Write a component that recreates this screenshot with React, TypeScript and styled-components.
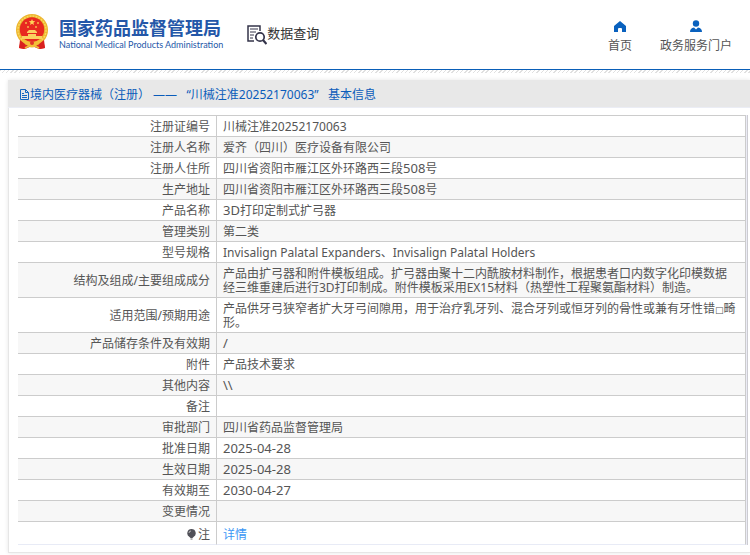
import React from "react";
import styled, { createGlobalStyle } from "styled-components";

const GlobalStyle = createGlobalStyle`
  body {
    margin: 0;
    background: #fff;
    color: #555;
    font: 12px/14px "Noto Sans", "Noto Sans CJK SC", sans-serif;
  }
  * { box-sizing: border-box; }
`;

const Header = styled.header`
  display: flex;
  align-items: flex-start;
  height: 70px;
  padding: 0 18px 0 15px;
  border-bottom: 1px solid #0a5fb8;
`;

const Hatch = styled.div`
  height: 3px;
  background: repeating-linear-gradient(135deg, #e0e0e0 0 1px, #fff 1px 3px);
`;

const Brand = styled.a`
  display: flex;
  gap: 10px;
  padding-top: 14px;
  color: #2457a8;
  text-decoration: none;
`;

const BrandText = styled.span`
  display: flex;
  flex-direction: column;
  padding-top: 4px;
  white-space: nowrap;
`;

const BrandName = styled.strong`
  font-size: 18px;
  line-height: 20px;
`;

const BrandLatin = styled.span`
  font: 400 9px/14px Lato, sans-serif;
`;

const Section = styled.h1`
  display: flex;
  align-items: flex-start;
  margin: 24px 0 0 24px;
  font-size: 13px;
  line-height: 18px;
  font-weight: 400;
  color: #333;
  white-space: nowrap;
`;

const Nav = styled.nav`
  display: flex;
  gap: 28px;
  margin-left: auto;
  padding-top: 20px;
`;

const NavLink = styled.a`
  display: flex;
  flex-direction: column;
  align-items: center;
  gap: 5px;
  color: #555;
  text-decoration: none;
  white-space: nowrap;
`;

const Card = styled.main`
  margin: 7px 0 2px 8px;
  box-shadow: 0 0 4px rgba(0, 0, 0, 0.1);
`;

const CardTitle = styled.h2`
  display: flex;
  align-items: center;
  height: 28px;
  margin: 0;
  padding: 2px 0 0 11px;
  border-bottom: 1px solid #ebedf5;
  background: #e8e8e8;
  color: #0b5cba;
  font-size: 12px;
  font-weight: 400;
  white-space: pre;
`;

const CardBody = styled.div`
  padding: 7px 2px 7px 9px;
  border: solid #e6e6e6;
  border-width: 0 0 1px 1px;
`;

const TableFrame = styled.div`
  padding-right: 1px;
  border-right: 1px solid #ccccd2;
  background: #ebebf5;
`;

const Table = styled.table`
  width: 100%;
  table-layout: fixed;
  border-collapse: separate;
  border-spacing: 0;
  border-top: 1px solid #ccc;
  background: #fff;
`;

const Row = styled.tr`
  &:nth-child(even) { background: #f7f7f7; }
  &:last-child > * {
    height: 23px;
    padding-top: 5px;
    border-bottom-color: #e8ebf6;
  }
`;

const Label = styled.th`
  width: 198px;
  padding: 4px 6px 2px 0;
  border-bottom: 1px solid #ccc;
  font-weight: 400;
  text-align: right;
`;

const Value = styled.td`
  height: 21px;
  padding: 4px 7px 2px 6px;
  border: solid #ccc;
  border-width: 0 1px 1px 1px;
  overflow-wrap: anywhere;
`;

const Latin = styled.span`
  font-size: 13px;
  line-height: 0;
`;

const SmallGlyph = styled.span`
  font-family: "DejaVu Sans", sans-serif;
  font-size: 9px;
  line-height: 0;
`;

const Detail = styled.a`
  color: #3b97f5;
  text-decoration: none;
`;

const NoteMark = styled.svg`
  margin-right: 2px;
  vertical-align: -1px;
`;

const Emblem = () => (
  <svg width="34" height="36" viewBox="0 0 34 36" aria-hidden="true">
    <path d="M6 26 4 34l6 1 7-3 7 3 6-1-2-8Z" fill="#df2822" />
    <circle cx="17" cy="16" r="16" fill="#edb52f" />
    <circle cx="17" cy="16" r="14" fill="none" stroke="#f8d95e" strokeWidth="1.5" strokeDasharray="2 1" />
    <circle cx="17" cy="15.500" r="12.200" fill="#e82920" />
    <path d="m17 5 .9 2.100 2.300.2-1.800 1.400.6 2.200-2-1.200-2 1.200.6-2.200-1.800-1.400 2.300-.2Z" fill="#ffd45a" />
    <g fill="#f8b64a"><circle cx="11" cy="9" r="1" /><circle cx="23" cy="9" r="1" /><circle cx="13" cy="13" r="1" /><circle cx="21" cy="13" r="1" /></g>
    <path d="m12 18 2-2h6l2 2v1H12Zm1 2h8v2H13Zm-6 2h20v3H7Z" fill="#fbd060" />
    <path d="M5 26q7 0 9 2 3 3 6 0 2-2 9-2l-3 4q-3-1-5 2-4 3-8 0-2-3-5-2Z" fill="#f3bf38" />
    <path d="m5 26-1 8 5 1 1-5Zm24 0 1 8-5 1-1-5Z" fill="#d9201e" />
    <circle cx="17" cy="29" r="2" fill="#e1362a" />
    <path d="m10 34 4-2m10 2-4-2" stroke="#eebd3b" strokeWidth="1.500" />
  </svg>
);

const SearchDoc = () => (
  <svg width="20" height="21" viewBox="0 0 20 21" fill="none" stroke="#34344a" aria-hidden="true">
    <path d="M7 17H1V2h12v5" strokeWidth="1.500" />
    <path d="M3 5h8M3 8h6M3 11h4M3 14h3" />
    <circle cx="13" cy="13" r="4.200" strokeWidth="1.700" />
    <path d="m16 16 3.500 4" strokeWidth="2.200" />
  </svg>
);

const HomeIcon = () => (
  <svg width="12" height="14" viewBox="0 0 12 14" aria-hidden="true">
    <path d="M6 1 0 6v6h4V9q0-1 1-1h2q1 0 1 1v3h4V6Z" fill="#0961be" />
  </svg>
);

const UserIcon = () => (
  <svg width="12" height="14" viewBox="0 0 12 14" fill="#0961be" aria-hidden="true">
    <circle cx="6" cy="3.500" r="3.200" />
    <path d="M0 12q0-4 4-4.500l2 2 2-2q4 .5 4 4.500Z" />
  </svg>
);

const FileIcon = () => (
  <svg width="11" height="12" viewBox="0 0 11 12" fill="none" stroke="#1767bf" aria-hidden="true">
    <path d="M1.500 .5H6.500L9.500 3.500v7h-8ZM6.500 .5V3.500h3M3 4.500h2M3 6.500h5M3 8.500h5" />
  </svg>
);

const Bulb = () => (
  <NoteMark width="9" height="11" viewBox="0 0 9 11" aria-hidden="true">
    <path d="M4.500 0a4.200 4.200 0 0 1 2 7.900L5.500 9h-2l-1-1.100A4.200 4.200 0 0 1 4.500 0Z" fill="#505058" />
    <path d="M3.500 9.500h2v1h-2Z" fill="#666" />
    <path d="M2 4q0-2 2-2" stroke="#bbb" fill="none" />
  </NoteMark>
);

const records: [React.ReactNode, React.ReactNode][] = [
  ["注册证编号", "川械注准20252170063"],
  ["注册人名称", "爱齐（四川）医疗设备有限公司"],
  ["注册人住所", <>四川省资阳市雁江区外环路西三段<Latin>508</Latin>号</>],
  ["生产地址", <>四川省资阳市雁江区外环路西三段<Latin>508</Latin>号</>],
  ["产品名称", <><Latin>3D</Latin>打印定制式扩弓器</>],
  ["管理类别", "第二类"],
  ["型号规格", "Invisalign Palatal Expanders、Invisalign Palatal Holders"],
  ["结构及组成/主要组成成分", "产品由扩弓器和附件模板组成。扩弓器由聚十二内酰胺材料制作，根据患者口内数字化印模数据经三维重建后进行3D打印制成。附件模板采用EX15材料（热塑性工程聚氨酯材料）制造。"],
  ["适用范围/预期用途", <>产品供牙弓狭窄者扩大牙弓间隙用，用于治疗乳牙列、混合牙列或恒牙列的骨性或兼有牙性错<SmallGlyph>□</SmallGlyph>畸形。</>],
  ["产品储存条件及有效期", <Latin>/</Latin>],
  ["附件", "产品技术要求"],
  ["其他内容", <Latin>{"\\\\"}</Latin>],
  ["备注", ""],
  ["审批部门", "四川省药品监督管理局"],
  ["批准日期", <Latin>2025-04-28</Latin>],
  ["生效日期", <Latin>2025-04-28</Latin>],
  ["有效期至", <Latin>2030-04-27</Latin>],
  ["变更情况", ""],
  [<><Bulb />注</>, <Detail href="#detail">详情</Detail>],
];

export default function App() {
  return (
    <>
      <GlobalStyle />
      <Header>
        <Brand href="#top">
          <Emblem />
          <BrandText>
            <BrandName>国家药品监督管理局</BrandName>
            <BrandLatin>National Medical Products Administration</BrandLatin>
          </BrandText>
        </Brand>
        <Section><SearchDoc />数据查询</Section>
        <Nav>
          <NavLink href="#home"><HomeIcon />首页</NavLink>
          <NavLink href="#portal"><UserIcon />政务服务门户</NavLink>
        </Nav>
      </Header>
      <Hatch />
      <Card>
        <CardTitle>
          <FileIcon />
          <span>境内医疗器械（注册） ——   “川械注准20252170063”   基本信息</span>
        </CardTitle>
        <CardBody>
          <TableFrame>
            <Table>
              <tbody>
                {records.map(([label, value], i) => (
                  <Row key={i}>
                    <Label scope="row">{label}</Label>
                    <Value>{value}</Value>
                  </Row>
                ))}
              </tbody>
            </Table>
          </TableFrame>
        </CardBody>
      </Card>
    </>
  );
}
